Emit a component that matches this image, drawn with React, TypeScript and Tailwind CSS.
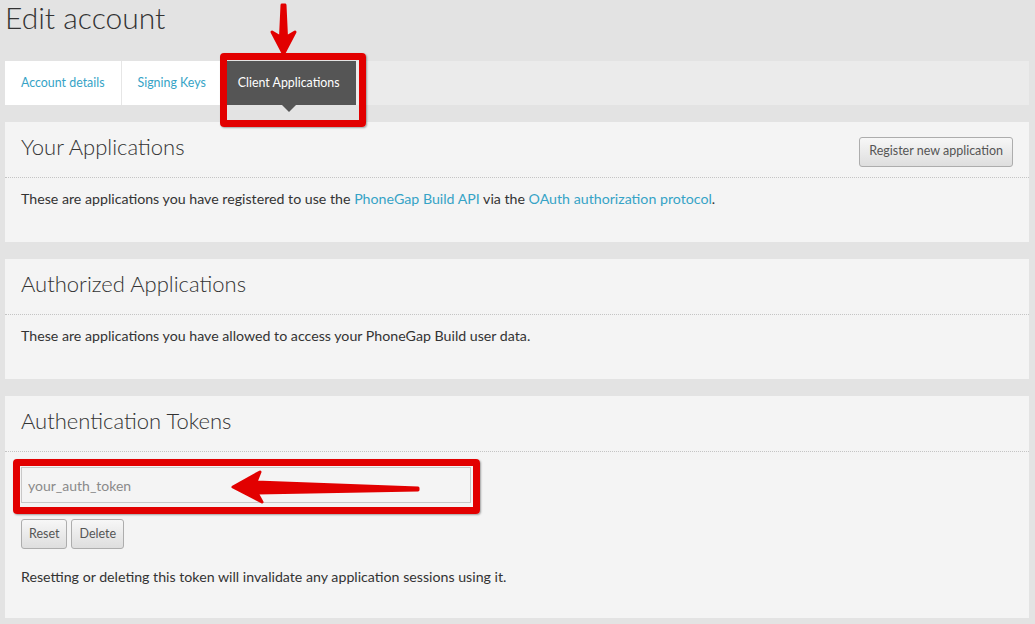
import React from 'react';

const font = { fontFamily: 'Lato, "Open Sans", sans-serif' };

function RedBox({ className }: { className: string }) {
  return (
    <div
      className={`pointer-events-none absolute rounded-[4px] border-[7px] border-[#e20000] shadow-[1px_1px_2px_rgba(0,0,0,0.35)] ${className}`}
    />
  );
}

function Panel({
  title,
  action,
  children,
}: {
  title: string;
  action?: React.ReactNode;
  children: React.ReactNode;
}) {
  return (
    <section className="bg-[#f4f4f4]">
      <div className="flex h-[56px] items-center justify-between border-b border-dotted border-[#c4c4c4] px-4">
        <h2 className="pb-[7px] text-[22px] font-light text-[#333]">{title}</h2>
        {action}
      </div>
      {children}
    </section>
  );
}

function GrayButton({ children, className = '' }: { children: React.ReactNode; className?: string }) {
  return (
    <button
      className={`h-[30px] rounded-[3px] border border-[#adadad] bg-gradient-to-b from-[#f7f7f7] to-[#dedede] text-[12.5px] text-[#555] ${className}`}
    >
      {children}
    </button>
  );
}

export default function App() {
  return (
    <div className="h-[624px] w-[1035px] overflow-hidden bg-[#e3e3e3] pl-[5px] pr-[6px]" style={font}>
      {/* Page title */}
      <h1 className="h-[61px] text-[30px] font-light leading-[34px] text-[#333]">Edit account</h1>

      {/* Tabs */}
      <div className="flex h-[44px] bg-[#ebebeb]">
        <div className="flex items-center border-r border-[#e6e6e6] bg-white px-4 text-[12.4px] text-[#36a3c6]">
          Account details
        </div>
        <div className="flex items-center bg-white px-4 text-[12.4px] text-[#36a3c6]">Signing Keys</div>
        <div className="relative flex items-center bg-[#555] px-4 text-[12.4px] text-white">
          Client Applications
          <span className="absolute left-1/2 top-full -ml-[7px] h-0 w-0 border-x-[7px] border-t-[7px] border-x-transparent border-t-[#555]" />
          <RedBox className="-left-[2px] -right-[10px] -top-[8px] -bottom-[22px]" />
          <svg className="absolute -top-[62px] left-[44px]" width="36" height="60" viewBox="0 0 36 60">
            <polygon
              points="16,6 19,6 20.5,38 29,33 17.5,55 6,33 14.5,38"
              fill="#e20000"
              stroke="#e20000"
              strokeWidth="3"
              strokeLinejoin="round"
            />
          </svg>
        </div>
      </div>

      <div className="mt-[17px] flex flex-col gap-[17px]">
        <Panel
          title="Your Applications"
          action={<GrayButton className="mt-[4px] px-[9px]">Register new application</GrayButton>}
        >
          <p className="px-4 pb-[33px] pt-[11px] text-[14.2px] leading-[20px] text-[#333]">
            These are applications you have registered to use the{' '}
            <span className="text-[#36a3c6]">PhoneGap Build API</span> via the{' '}
            <span className="text-[#36a3c6]">OAuth authorization protocol</span>.
          </p>
        </Panel>

        <Panel title="Authorized Applications">
          <p className="px-4 pb-[33px] pt-[11px] text-[14.2px] leading-[20px] text-[#333]">
            These are applications you have allowed to access your PhoneGap Build user data.
          </p>
        </Panel>

        <Panel title="Authentication Tokens">
          <div className="px-4 pb-[31px] pt-[15px]">
            <div className="relative w-[450px]">
              <input
                readOnly
                placeholder="your_auth_token"
                className="h-[36px] w-full border border-[#c8c8c8] bg-[#f4f4f4] px-[6px] text-[14px] text-[#333] placeholder:text-[#8a8a8a]"
              />
              <RedBox className="-left-[8px] -right-[9px] -top-[8px] -bottom-[11px]" />
              <svg className="absolute left-[207px] top-[0px]" width="196" height="40" viewBox="0 0 196 40">
                <polygon
                  points="5,20 32,5 28,15 190,21 190,23 29,26 34,35"
                  fill="#e20000"
                  stroke="#e20000"
                  strokeWidth="3"
                  strokeLinejoin="round"
                />
              </svg>
            </div>
            <div className="mt-[16px] flex gap-[4px]">
              <GrayButton className="px-[7px]">Reset</GrayButton>
              <GrayButton className="px-[7px]">Delete</GrayButton>
            </div>
            <p className="mt-[18px] text-[14.2px] leading-[20px] text-[#333]">
              Resetting or deleting this token will invalidate any application sessions using it.
            </p>
          </div>
        </Panel>
      </div>
    </div>
  );
}
